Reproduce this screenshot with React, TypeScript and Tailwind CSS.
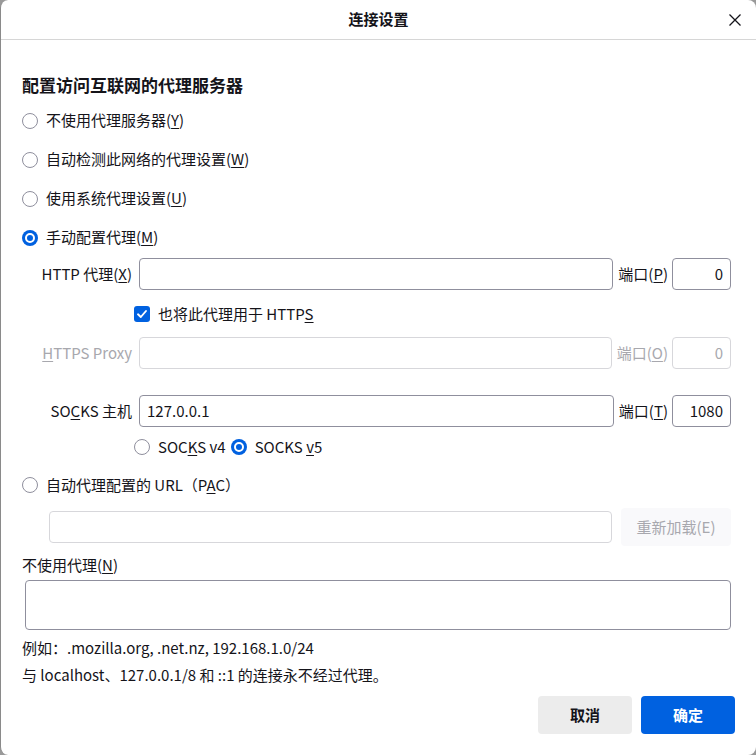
import React from "react";

const font = { fontFamily: '"Noto Sans CJK SC", "Noto Sans", sans-serif' };

function Radio({ checked }: { checked?: boolean }) {
  return checked ? (
    <span className="flex h-4 w-4 shrink-0 items-center justify-center rounded-full bg-[#0061e0]">
      <span className="h-[10px] w-[10px] rounded-full border-2 border-white bg-[#0061e0]" />
    </span>
  ) : (
    <span className="h-4 w-4 shrink-0 rounded-full border border-[#8f8f9d] bg-white" />
  );
}

function Key({ k }: { k: string }) {
  return <span className="underline underline-offset-2">{k}</span>;
}

function RadioRow({ checked, children }: { checked?: boolean; children: React.ReactNode }) {
  return (
    <div className="flex h-[39px] items-center gap-[8px]">
      <Radio checked={checked} />
      <span>{children}</span>
    </div>
  );
}

function Field({ value, disabled, align = "left" }: { value?: string; disabled?: boolean; align?: "left" | "right" }) {
  return (
    <div
      className={`flex h-8 w-full items-center rounded-[4px] border px-[7px] ${
        disabled ? "border-[#d7d7db] text-[#a8a8ae]" : "border-[#8f8f9d] text-[#15141a]"
      } ${align === "right" ? "justify-end" : ""}`}
    >
      {value}
    </div>
  );
}

function ProxyRow({
  label,
  value,
  portLabel,
  port,
  disabled,
}: {
  label: React.ReactNode;
  value?: string;
  portLabel: React.ReactNode;
  port: string;
  disabled?: boolean;
}) {
  return (
    <div className={`flex h-8 items-center ${disabled ? "text-[#a8a8ae]" : ""}`}>
      <div className="w-[111px] shrink-0 pr-[1px] text-right">{label}</div>
      <div className="ml-[6px] flex-1">
        <Field value={value} disabled={disabled} />
      </div>
      <div className="ml-[5px] shrink-0">{portLabel}</div>
      <div className="ml-[4px] w-[59px] shrink-0">
        <Field value={port} disabled={disabled} align="right" />
      </div>
    </div>
  );
}

export default function App() {
  return (
    <div className="h-[755px] w-[756px] bg-[#9a9a9a]" style={font}>
      <div className="flex h-full flex-col overflow-hidden rounded-[8px] border-l border-[#8a8a8a] bg-white text-[15px] text-[#15141a]">
        <div className="relative flex h-10 shrink-0 items-center justify-center border-b border-[#d6d6d6]">
          <span className="font-semibold">连接设置</span>
          <svg className="absolute right-[15px] top-[14px]" width="12" height="12" viewBox="0 0 12 12">
            <path d="M0.5 0.5 L11.5 11.5 M11.5 0.5 L0.5 11.5" stroke="#15141a" strokeWidth="1.3" />
          </svg>
        </div>

        <div className="flex flex-col pl-[21px] pr-[25px] pt-[29px]">
          <div className="flex h-8 items-center text-[17px] font-bold">配置访问互联网的代理服务器</div>

          <RadioRow>
            不使用代理服务器(<Key k="Y" />)
          </RadioRow>
          <RadioRow>
            自动检测此网络的代理设置(<Key k="W" />)
          </RadioRow>
          <RadioRow>
            使用系统代理设置(<Key k="U" />)
          </RadioRow>
          <RadioRow checked>
            手动配置代理(<Key k="M" />)
          </RadioRow>

          <div className="mt-[1px]">
            <ProxyRow
              label={
                <>
                  HTTP 代理(<Key k="X" />)
                </>
              }
              portLabel={
                <>
                  端口(<Key k="P" />)
                </>
              }
              port="0"
            />
          </div>

          <div className="mt-1 flex h-10 items-center pl-[112px]">
            <span className="flex h-4 w-4 items-center justify-center rounded-[3px] bg-[#0061e0]">
              <svg width="12" height="12" viewBox="0 0 12 12">
                <path d="M2 6.3 L4.8 9 L10 3" fill="none" stroke="white" strokeWidth="1.9" strokeLinecap="round" strokeLinejoin="round" />
              </svg>
            </span>
            <span className="ml-[8px]">
              也将此代理用于 HTTP<Key k="S" />
            </span>
          </div>

          <div className="mt-[3px]">
            <ProxyRow
              disabled
              label={
                <>
                  <Key k="H" />
                  TTPS Proxy
                </>
              }
              portLabel={
                <>
                  端口(<Key k="O" />)
                </>
              }
              port="0"
            />
          </div>

          <div className="mt-[26px]">
            <ProxyRow
              label={
                <>
                  SO<Key k="C" />
                  KS 主机
                </>
              }
              value="127.0.0.1"
              portLabel={
                <>
                  端口(<Key k="T" />)
                </>
              }
              port="1080"
            />
          </div>

          <div className="mt-1 flex h-8 items-center pl-[112px]">
            <Radio />
            <span className="ml-[8px]">
              SOC<Key k="K" />S v4
            </span>
            <span className="ml-[5px]">
              <Radio checked />
            </span>
            <span className="ml-[8px]">
              SOCKS <Key k="v" />5
            </span>
          </div>

          <div className="mt-[3px]">
            <div className="flex h-[38px] items-center gap-[8px]">
              <Radio />
              <span>
                自动代理配置的 URL（P<Key k="A" />C）
              </span>
            </div>
          </div>

          <div className="mt-1 flex h-[38px] items-center pl-[27px]">
            <div className="h-8 flex-1 rounded-[4px] border border-[#d7d7db]" />
            <div className="ml-[9px] flex h-[38px] w-[110px] items-center justify-center rounded-[4px] bg-[#f9f9fb] text-[#a8a8ae]">
              重新加载(E)
            </div>
          </div>

          <div className="mt-1 flex h-[30px] items-center">
            不使用代理(<Key k="N" />)
          </div>
          <div className="ml-[3px] h-[50px] rounded-[4px] border border-[#8f8f9d]" />

          <div className="mt-1 flex h-[28px] items-center">例如：.mozilla.org, .net.nz, 192.168.1.0/24</div>
          <div className="flex h-[26px] items-center">与 localhost、127.0.0.1/8 和 ::1 的连接永不经过代理。</div>

          <div className="-mr-1 mt-2 flex justify-end gap-[9px]">
            <div className="flex h-[38px] w-[94px] items-center justify-center rounded-[4px] bg-[#ececec] font-bold">取消</div>
            <div className="flex h-[38px] w-[94px] items-center justify-center rounded-[4px] bg-[#0061e0] font-bold text-white">确定</div>
          </div>
        </div>
      </div>
    </div>
  );
}
